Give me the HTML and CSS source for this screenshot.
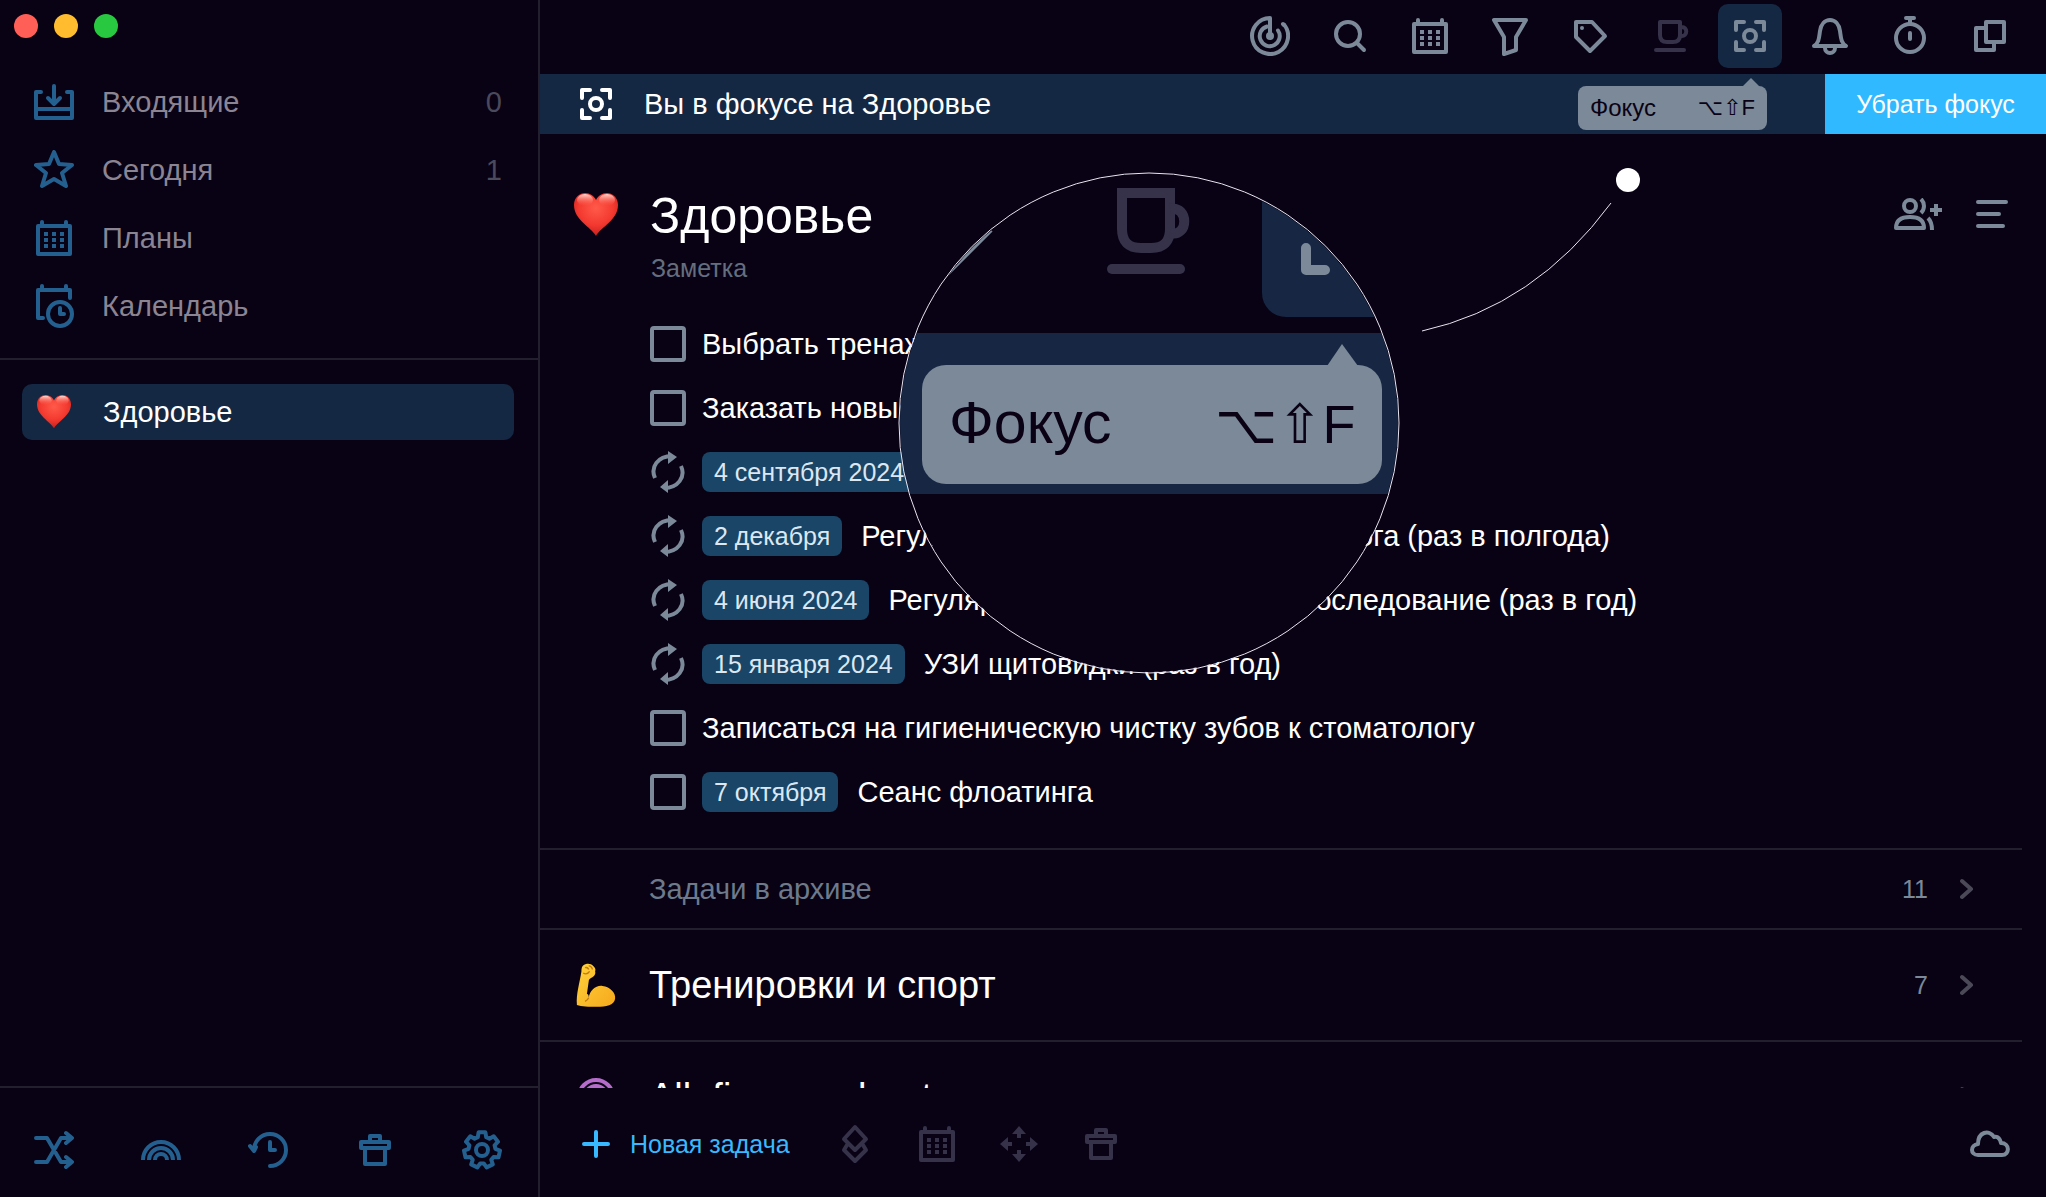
FILE: index.html
```
<!DOCTYPE html>
<html lang="ru">
<head>
<meta charset="utf-8">
<title>Здоровье</title>
<link rel="stylesheet" href="styles.css">
</head>
<body>

<svg class="sprite" width="0" height="0">
  <defs>
    <radialGradient id="heart-fill" cx="50%" cy="35%" r="65%">
      <stop offset="0" stop-color="#ff5a4a"/>
      <stop offset="0.6" stop-color="#f43a30"/>
      <stop offset="1" stop-color="#c8201c"/>
    </radialGradient>
    <linearGradient id="heart-shine" x1="0" y1="0" x2="0" y2="1">
      <stop offset="0" stop-color="#ffd9d2"/>
      <stop offset="1" stop-color="#ff5a4a" stop-opacity="0"/>
    </linearGradient>
    <linearGradient id="arm-fill" x1="0" y1="0" x2="1" y2="1">
      <stop offset="0" stop-color="#ffd23c"/>
      <stop offset="1" stop-color="#f6a81c"/>
    </linearGradient>
    <clipPath id="lens-clip"><circle cx="250" cy="250" r="249"/></clipPath>
  </defs>
  <symbol id="i-heart" viewBox="0 0 44 44">
    <path d="M22 43C17 34 0 27 0 12 0 4 6 0 11 0c5 0 9 3 11 7 2-4 6-7 11-7 5 0 11 4 11 12 0 15-17 22-22 31z" fill="url(#heart-fill)"/>
    <ellipse cx="11" cy="7" rx="8" ry="6" fill="url(#heart-shine)"/>
    <ellipse cx="33" cy="7" rx="8" ry="6" fill="url(#heart-shine)"/>
  </symbol>
  <symbol id="i-arm" viewBox="0 0 44 48">
    <path d="M1 46C0 34 4 22 6 9c0-4 1-7 5-8 3-1 6 0 8 2 2 2 3 4 2 6 1 3-1 6-4 7-2 1-3 2-3 4l-2 14c2 0 2 2 2 4 1-8 8-14 15-13 9 1 15 8 14 14-1 7-10 9-20 9-9 0-17 0-22-2z" fill="url(#arm-fill)"/>
    <path d="M14 38c-1 2-2 3-4 4M10 5c2-1 3 0 4 2M14 3c2 0 4 2 4 4M8 11c2 1 5 1 7-2" fill="none" stroke="#c27a10" stroke-width="1.5"/>
  </symbol>
  <symbol id="i-inbox" viewBox="0 0 40 40"><path d="M7 10H2V36H38V10H33M2 27H38M20 4V21M14 16L20 22L26 16"/></symbol>
  <symbol id="i-star" viewBox="0 0 40 40"><path d="M20 2L25 14L38 15L28 23L32 36L20 29L8 36L12 23L2 15L15 14Z"/></symbol>
  <symbol id="i-calendar" viewBox="0 0 40 40">
    <path d="M4 8H36V36H4ZM8 4V8M32 4V8"/>
    <path class="solid" d="M10 14h4v4h-4zM18 14h4v4h-4zM26 14h4v4h-4zM10 20h4v4h-4zM18 20h4v4h-4zM26 20h4v4h-4zM10 26h4v4h-4zM18 26h4v4h-4zM26 26h4v4h-4z"/>
  </symbol>
  <symbol id="i-planner" viewBox="0 0 40 40" overflow="visible"><path d="M9 32H4V4H36V12M8 0V4M32 0V4M26 22V28H30"/><circle cx="26" cy="28" r="12"/></symbol>
  <symbol id="i-shuffle" viewBox="0 0 40 40"><path d="M2 8H13L27 32H37M2 32H13L27 8H37M32 3L38 8L32 13M32 27L38 32L32 37"/></symbol>
  <symbol id="i-rainbow" viewBox="0 0 40 40"><path class="butt" d="M2 30a18 18 0 0 1 36 0M8 30a12 12 0 0 1 24 0M14 30a6 6 0 0 1 12 0"/></symbol>
  <symbol id="i-history" viewBox="0 0 40 40"><path d="M22 36A16 16 0 1 0 6 20M2 16L6 21L8 17M22 12V20H27"/></symbol>
  <symbol id="i-trash" viewBox="0 0 40 40"><path d="M6 12H34V18H6ZM10 18V34H30V18M15 12V6H25V12"/></symbol>
  <symbol id="i-gear" viewBox="0 0 40 40">
    <path d="M16.6 2.3L23.4 2.3 24.2 7.2 27.4 8.7 31.7 6.3 36 11.7 32.6 15.3 33.4 18.8 38 20.6 36.5 27.3 31.6 26.9 29.3 29.8 30.8 34.4 24.6 37.4 21.8 33.4 18.2 33.4 15.4 37.4 9.2 34.4 10.7 29.8 8.4 26.9 3.5 27.3 2 20.6 6.6 18.8 7.4 15.3 4 11.7 8.3 6.3 12.6 8.7 15.8 7.2Z"/>
    <circle cx="20" cy="20" r="6"/>
  </symbol>
  <symbol id="i-radar" viewBox="0 0 40 40"><path class="butt" d="M20 20V2A18 18 0 1 0 33.500 8"/><path d="M17 10.500A10 10 0 1 0 28 14.500M33 8L34 9"/><circle class="solid" cx="20" cy="20" r="4"/></symbol>
  <symbol id="i-search" viewBox="0 0 40 40"><circle cx="18" cy="18" r="12"/><path d="M27 27L34 34"/></symbol>
  <symbol id="i-funnel" viewBox="0 0 40 40"><path d="M4 4H36L26 21V34L14 38V21Z"/></symbol>
  <symbol id="i-tag" viewBox="0 0 40 40"><path d="M6 6H22L35 20L20 35L6 21Z"/><circle class="solid" cx="12" cy="12" r="2"/></symbol>
  <symbol id="i-cup" viewBox="0 0 40 40"><path d="M10 6H30V19Q30 26 23 26H17Q10 26 10 19ZM31 11C38 10 38 21 31 20M6 34H34"/></symbol>
  <symbol id="i-focus" viewBox="0 0 40 40"><path d="M6 14V6H14M26 6H34V14M34 26V34H26M14 34H6V26"/><circle cx="20" cy="20" r="6"/></symbol>
  <symbol id="i-bell" viewBox="0 0 40 40"><path d="M4 30C9 27 9 22 10 15C11 8 15 4 20 4S29 8 30 15C31 22 31 27 36 30ZM15 32A5 5 0 0 0 25 32"/></symbol>
  <symbol id="i-timer" viewBox="0 0 40 40"><circle cx="20" cy="22" r="14"/><path d="M16 2H24M20 2V8M20 17V23"/></symbol>
  <symbol id="i-windows" viewBox="0 0 40 40"><path d="M16 6H34V26H16ZM14 12H6V34H24V28"/></symbol>
  <symbol id="i-share" viewBox="0 0 48 32">
    <circle cx="16" cy="8" r="6"/>
    <path class="butt" d="M2 30C2 22 8 19 16 19S30 22 30 30ZM27 1C31 5 31 11 27 15M34 20C37 23 38 26 38 32M36 12H48M42 6V18"/>
  </symbol>
  <symbol id="i-menu" viewBox="0 0 40 40"><path d="M6 8H34M6 20H27M6 32H31"/></symbol>
  <symbol id="i-repeat" viewBox="0 0 36 44">
    <path class="butt" d="M5 28C0 17 8 6 22 6M31 16C36 27 28 38 14 38"/>
    <path class="solid" d="M18 1L27 7L18 14ZM18 43L10 37L18 30Z"/>
  </symbol>
  <symbol id="i-chevron" viewBox="0 0 14 22"><path d="M2 3L11 11L2 19"/></symbol>
  <symbol id="i-plus" viewBox="0 0 40 40"><path d="M20 8V32M8 20H32"/></symbol>
  <symbol id="i-layers" viewBox="0 0 40 40"><path d="M20 3L31 15L20 26L9 15ZM12 21L9 26L20 37L31 26L28 21"/></symbol>
  <symbol id="i-move" viewBox="0 0 40 40">
    <path class="solid" d="M20 2L27 10H13ZM20 38L27 30H13ZM1 20L9 13V27ZM39 20L31 13V27Z"/>
    <path class="butt" d="M20 8V14M20 26V32M7 20H13M27 20H33"/>
  </symbol>
  <symbol id="i-cloud" viewBox="0 0 40 40"><path d="M8 31C0 31 0 21 8 20C8 8 19 5 24 13C28 12 30 15 31 19C40 19 40 31 32 31Z"/></symbol>
</svg>

<div class="app">

  <aside class="sidebar">
    <div class="lights"><span class="red"></span><span class="yellow"></span><span class="green"></span></div>
    <nav class="nav">
      <a href="#inbox"><svg class="icon"><use href="#i-inbox"/></svg>Входящие<span class="num">0</span></a>
      <a href="#today"><svg class="icon"><use href="#i-star"/></svg>Сегодня<span class="num">1</span></a>
      <a href="#plans"><svg class="icon"><use href="#i-calendar"/></svg>Планы</a>
      <a href="#calendar"><svg class="icon"><use href="#i-planner"/></svg>Календарь</a>
    </nav>
    <div class="projects">
      <a href="#health" class="current"><svg class="emoji"><use href="#i-heart"/></svg>Здоровье</a>
    </div>
    <div class="side-tools">
      <button aria-label="Перемешать"><svg class="icon"><use href="#i-shuffle"/></svg></button>
      <button aria-label="Темы"><svg class="icon"><use href="#i-rainbow"/></svg></button>
      <button aria-label="История"><svg class="icon"><use href="#i-history"/></svg></button>
      <button aria-label="Корзина"><svg class="icon"><use href="#i-trash"/></svg></button>
      <button aria-label="Настройки"><svg class="icon"><use href="#i-gear"/></svg></button>
    </div>
  </aside>

  <main class="main">
    <div class="toolbar">
      <button aria-label="Обзор"><svg class="icon"><use href="#i-radar"/></svg></button>
      <button aria-label="Поиск"><svg class="icon"><use href="#i-search"/></svg></button>
      <button aria-label="Даты"><svg class="icon"><use href="#i-calendar"/></svg></button>
      <button aria-label="Фильтр"><svg class="icon"><use href="#i-funnel"/></svg></button>
      <button aria-label="Метки"><svg class="icon"><use href="#i-tag"/></svg></button>
      <button aria-label="Перерыв" class="dim"><svg class="icon"><use href="#i-cup"/></svg></button>
      <div class="with-tip">
        <button aria-label="Фокус" class="active"><svg class="icon"><use href="#i-focus"/></svg></button>
        <div class="tip"><span>Фокус</span><kbd>⌥⇧F</kbd></div>
      </div>
      <button aria-label="Уведомления"><svg class="icon"><use href="#i-bell"/></svg></button>
      <button aria-label="Таймер"><svg class="icon"><use href="#i-timer"/></svg></button>
      <button aria-label="Окна"><svg class="icon"><use href="#i-windows"/></svg></button>
    </div>

    <div class="focus-bar">
      <svg class="icon"><use href="#i-focus"/></svg>
      <span>Вы в фокусе на Здоровье</span>
      <button>Убрать фокус</button>
    </div>

    <div class="content">
      <header class="head">
        <svg class="emoji"><use href="#i-heart"/></svg>
        <div class="head-text">
          <h1>Здоровье</h1>
          <p>Заметка</p>
        </div>
        <button aria-label="Поделиться"><svg class="icon wide"><use href="#i-share"/></svg></button>
        <button aria-label="Меню"><svg class="icon"><use href="#i-menu"/></svg></button>
      </header>

      <ul class="tasks">
        <li><input type="checkbox" id="t1"><label for="t1">Выбрать тренажёрный зал</label></li>
        <li><input type="checkbox" id="t2"><label for="t2">Заказать новые витамины</label></li>
        <li><svg class="repeat"><use href="#i-repeat"/></svg><time>4 сентября 2024</time><span>Сдать анализы</span></li>
        <li><svg class="repeat"><use href="#i-repeat"/></svg><time>2 декабря</time><span>Регулярный приём у врача-стоматолога (раз в полгода)</span></li>
        <li><svg class="repeat"><use href="#i-repeat"/></svg><time>4 июня 2024</time><span>Регулярное гинекологическое обследование (раз в год)</span></li>
        <li><svg class="repeat"><use href="#i-repeat"/></svg><time>15 января 2024</time><span>УЗИ щитовидки (раз в год)</span></li>
        <li><input type="checkbox" id="t7"><label for="t7">Записаться на гигиеническую чистку зубов к стоматологу</label></li>
        <li><input type="checkbox" id="t8"><time>7 октября</time><label for="t8">Сеанс флоатинга</label></li>
      </ul>

      <a href="#archive" class="row archive"><span class="name">Задачи в архиве</span><span class="num">11</span><svg class="chevron"><use href="#i-chevron"/></svg></a>
      <a href="#sport" class="row"><svg class="emoji arm"><use href="#i-arm"/></svg><span class="name">Тренировки и спорт</span><span class="num">7</span><svg class="chevron"><use href="#i-chevron"/></svg></a>
      <a href="#all" class="row"><svg class="rings" viewBox="0 0 40 40"><circle cx="20" cy="20" r="17"/><circle cx="20" cy="20" r="11"/></svg><span class="name">All. figures about</span><span class="num">6</span><svg class="chevron"><use href="#i-chevron"/></svg></a>
    </div>

    <footer class="foot">
      <button class="new"><svg class="icon"><use href="#i-plus"/></svg>Новая задача</button>
      <div class="foot-tools">
        <button aria-label="Проект"><svg class="icon"><use href="#i-layers"/></svg></button>
        <button aria-label="Дата"><svg class="icon"><use href="#i-calendar"/></svg></button>
        <button aria-label="Переместить"><svg class="icon"><use href="#i-move"/></svg></button>
        <button aria-label="Удалить"><svg class="icon"><use href="#i-trash"/></svg></button>
      </div>
      <button class="sync" aria-label="Синхронизация"><svg class="icon"><use href="#i-cloud"/></svg></button>
    </footer>

    <!-- magnifier over the list with a pointer to the tooltip -->
    <svg class="lens" viewBox="0 0 742 502">
      <g clip-path="url(#lens-clip)">
        <rect class="bg" width="500" height="500"/>
        <path d="M44 101L90 55" stroke="#7b8999" stroke-width="10"/>
        <g stroke="#35324a" stroke-width="10" fill="none">
          <path d="M223 20H271V56Q271 75 252 75H242Q223 75 223 56Z"/>
          <path d="M271 36C290 32 290 65 271 60"/>
          <path d="M213 96H281" stroke-linecap="round"/>
        </g>
        <rect class="bar" x="363" y="-80" width="200" height="224" rx="24"/>
        <path d="M407 75V97H426" fill="none" stroke="#7b8999" stroke-width="10" stroke-linecap="round" stroke-linejoin="round"/>
        <rect class="bar" y="160" width="500" height="161"/>
        <rect class="plate" x="23" y="192" width="460" height="119" rx="24"/>
        <path class="plate" d="M428 193L443 171L459 193Z"/>
        <text x="50" y="270">Фокус</text>
        <text class="keys" x="316" y="270">⌥⇧F</text>
      </g>
      <circle class="rim" cx="250" cy="250" r="250"/>
      <path class="rim" d="M523 158Q636 133 712 30"/>
      <circle cx="729" cy="7" r="12" fill="#fff"/>
    </svg>
  </main>

</div>
</body>
</html>
```
FILE: styles.css
```
* {
    box-sizing: border-box;
}

body {
    margin: 0;
    background: #090214;
    color: #fff;
    font: 29px/32px "Liberation Sans", "DejaVu Sans", Arial, sans-serif;
}

a {
    color: inherit;
    text-decoration: none;
}

button {
    display: flex;
    align-items: center;
    justify-content: center;
    padding: 0;
    border: 0;
    background: none;
    color: inherit;
    font: inherit;
    cursor: pointer;
}

.sprite {
    position: absolute;
}

.icon, .repeat, .chevron {
    flex: none;
    width: 40px;
    height: 40px;
    overflow: visible;
    fill: none;
    stroke: currentColor;
    stroke-width: 4px;
    stroke-linecap: round;
    stroke-linejoin: round;
}

.solid {
    fill: currentColor;
    stroke: none;
}

.butt {
    stroke-linecap: butt;
}

.app {
    display: flex;
    height: 100vh;
    overflow: hidden;
}

/* sidebar */

.sidebar {
    display: flex;
    flex-direction: column;
    flex: none;
    width: 540px;
    border-right: 2px solid #241f2f;
}

.lights {
    display: flex;
    gap: 16px;
    padding: 14px 14px 30px;
}

.lights span {
    width: 24px;
    height: 24px;
    border-radius: 50%;
}

.red { background: #ff5f57; }
.yellow { background: #febc2e; }
.green { background: #28c840; }

.nav {
    padding-bottom: 18px;
    border-bottom: 2px solid #241f2f;
    color: #8b8593;
}

.nav a {
    display: flex;
    align-items: center;
    gap: 28px;
    height: 68px;
    padding: 0 36px 0 34px;
}

.nav .icon, .side-tools {
    color: #24608f;
}

.nav .num {
    margin-left: auto;
    color: #4b4a5c;
}

.projects {
    flex: 1;
    padding: 24px;
    padding-left: 22px;
}

.projects a {
    display: flex;
    align-items: center;
    gap: 32px;
    height: 56px;
    padding-left: 15px;
    border-radius: 10px;
}

.projects .current {
    background: #142843;
}

.projects .emoji {
    width: 34px;
    height: 34px;
}

.side-tools {
    display: flex;
    justify-content: space-between;
    height: 111px;
    padding: 14px 36px 0 34px;
    border-top: 2px solid #241f2f;
}

/* main column */

.main {
    position: relative;
    display: flex;
    flex-direction: column;
    flex: 1;
    min-width: 0;
}

.toolbar {
    display: flex;
    justify-content: flex-end;
    gap: 16px;
    height: 74px;
    padding: 4px 24px 0 0;
    color: #7b8999;
}

.toolbar button {
    width: 64px;
    height: 64px;
    border-radius: 10px;
}

.toolbar .dim {
    color: #35324a;
}

.toolbar .active {
    background: #142843;
}

.with-tip {
    position: relative;
}

.tip {
    position: absolute;
    top: 82px;
    right: 15px;
    z-index: 2;
    display: flex;
    align-items: center;
    justify-content: space-between;
    width: 189px;
    height: 44px;
    padding: 0 12px;
    border-radius: 8px;
    background: #7b8999;
    color: #0a0214;
    font-size: 24px;
}

.tip::before {
    content: "";
    position: absolute;
    right: 8px;
    bottom: 100%;
    border: 8px solid transparent;
    border-top: 0;
    border-bottom-color: #7b8999;
}

.tip kbd {
    font: inherit;
    font-size: 22px;
}

.focus-bar {
    display: flex;
    align-items: center;
    flex: none;
    height: 60px;
    padding-left: 36px;
    background: #142843;
}

.focus-bar span {
    flex: 1;
    padding-left: 28px;
}

.focus-bar button {
    width: 221px;
    height: 60px;
    background: #30b9ff;
    font-size: 25px;
}

.content {
    flex: 1;
    min-height: 0;
    overflow: hidden;
}

.emoji {
    flex: none;
    width: 44px;
    height: 44px;
}

.head {
    display: flex;
    align-items: flex-start;
    height: 178px;
    padding: 54px 34px 0 34px;
    color: #7b8999;
}

.head .emoji {
    margin-top: 5px;
}

.head-text {
    flex: 1;
    padding-left: 32px;
}

h1 {
    margin: 0;
    color: #fff;
    font-size: 50px;
    font-weight: normal;
    line-height: 56px;
}

.head p {
    margin: 8px 0 0;
    padding-left: 1px;
    font-size: 25px;
    opacity: .8;
}

.head button {
    height: 52px;
    margin-left: 30px;
}

.head .wide {
    width: 48px;
    height: 32px;
}

.tasks {
    margin: 0;
    padding: 0 0 24px 110px;
    list-style: none;
}

.tasks li {
    display: flex;
    align-items: center;
    height: 64px;
    white-space: nowrap;
}

.tasks input {
    appearance: none;
    flex: none;
    width: 36px;
    height: 36px;
    margin: 0 16px 0 0;
    border: 4px solid #7b8999;
    border-radius: 4px;
}

.repeat {
    width: 36px;
    height: 44px;
    margin-right: 16px;
    color: #7b8999;
}

.tasks time {
    height: 40px;
    margin-right: 19px;
    padding: 0 12px;
    border-radius: 8px;
    background: #1a4566;
    color: #dbe8f4;
    font-size: 25px;
    line-height: 40px;
}

.row {
    display: flex;
    align-items: center;
    height: 112px;
    margin-right: 24px;
    padding: 0 48px 0 36px;
    border-top: 2px solid #241f2f;
    font-size: 38px;
}

.row .name {
    flex: 1;
    padding-left: 33px;
}

.row .emoji {
    width: 40px;
    height: 48px;
}

.row .num {
    margin-right: 32px;
    color: #7b8999;
    font-size: 25px;
}

.archive {
    height: 80px;
    padding-left: 76px;
    color: #6c7a8c;
    font-size: 29px;
}

.chevron {
    width: 14px;
    height: 22px;
    color: #4b4858;
}

.rings {
    width: 40px;
    height: 40px;
    fill: none;
    stroke: #b66ccb;
    stroke-width: 4px;
}

.foot {
    display: flex;
    align-items: center;
    flex: none;
    height: 109px;
    padding: 2px 36px 0 36px;
}

.new {
    gap: 14px;
    color: #38b9ff;
    font-size: 25px;
}

.foot-tools {
    display: flex;
    flex: 1;
    gap: 42px;
    padding-left: 45px;
    color: #35324a;
}

.sync {
    color: #7b8999;
}

/* magnifier */

.lens {
    position: absolute;
    top: 173px;
    right: 405px;
    z-index: 3;
    width: 742px;
    height: 502px;
    overflow: visible;
}

.lens .bg { fill: #090214; }
.lens .bar { fill: #172642; }
.lens .plate { fill: #7b8999; }

.lens text {
    fill: #0a0214;
    font-size: 59px;
}

.lens .keys {
    font-size: 54px;
}

.lens .rim {
    fill: none;
    stroke: #e8e4f0;
    stroke-width: 1px;
}
```
